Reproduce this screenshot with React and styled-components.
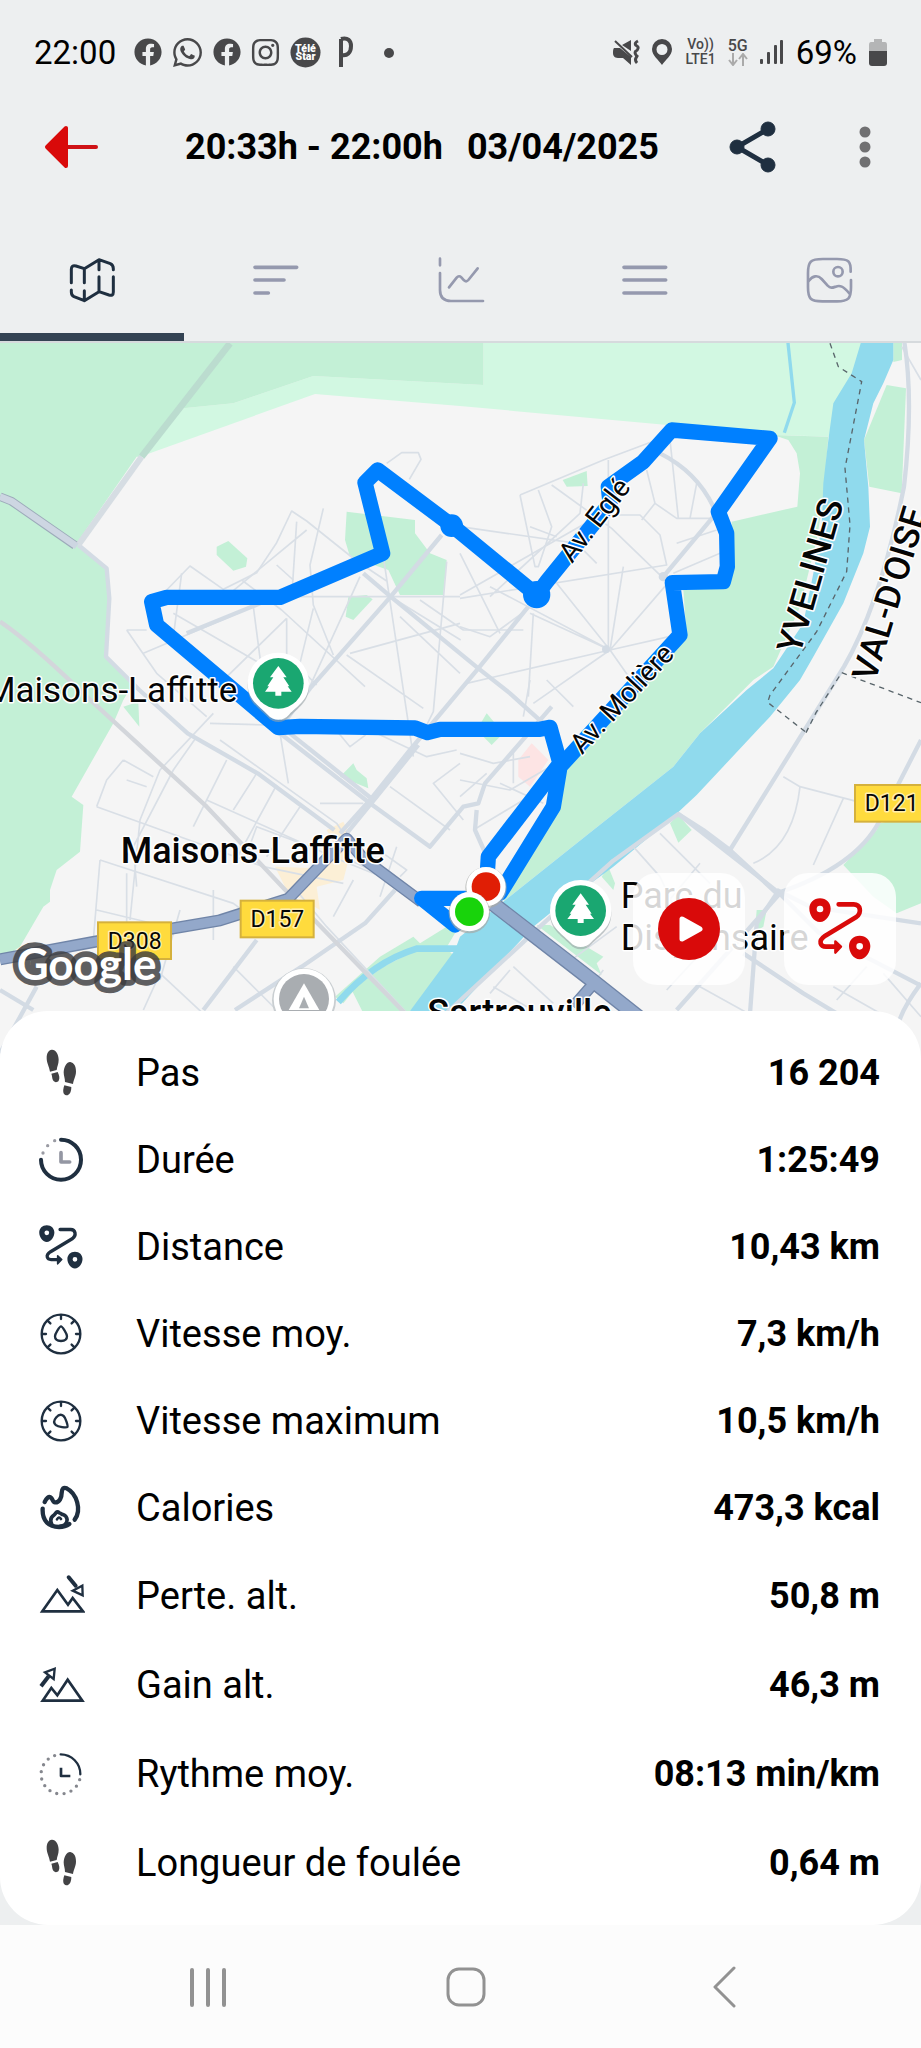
import React from 'react';
import styled, { createGlobalStyle } from 'styled-components';
import { FaFacebook, FaInstagram, FaWhatsapp } from 'react-icons/fa';

const colors = {
  page: '#edeff0',
  navy: '#1f2f40',
  muted: '#9599ae',
  red: '#d90a0a',
  status: '#48484a',
  route: '#0080ff',
  park: '#c3f0d6',
  lightPark: '#d2f8e2',
  water: '#90daed',
  street: '#d3dbe4',
  highway: '#93a8ca'
};

const GlobalStyle = createGlobalStyle`
  * {
    box-sizing: border-box;
  }
  body {
    margin: 0;
    background: ${colors.page};
    color: #000;
    font-family: Roboto, 'Liberation Sans', sans-serif;
  }
`;

const Screen = styled.div`
  display: flex;
  flex-direction: column;
  min-height: 100vh;
`;

const StatusBar = styled.div`
  display: flex;
  align-items: center;
  justify-content: space-between;
  height: 104px;
  padding: 0 34px;
  font-size: 33px;
`;

const StatusGroup = styled.div`
  display: flex;
  align-items: center;
  gap: ${props => props.$gap}px;
  color: ${colors.status};

  svg {
    display: block;
    flex: none;
  }
`;

const StatusText = styled.span`
  color: #000;
  margin-right: ${props => props.$after || 0}px;
`;

const NetworkLabel = styled.span`
  display: flex;
  flex-direction: column;
  align-items: center;
  font-size: ${props => props.$size}px;
  line-height: 15px;
  font-weight: 500;
`;

const TopBar = styled.header`
  display: flex;
  align-items: center;
  height: 86px;
  padding: 0 50px 0 44px;
`;

const IconButton = styled.button`
  display: flex;
  align-items: center;
  justify-content: center;
  padding: 0;
  border: 0;
  background: none;
  cursor: pointer;
`;

const Title = styled.h1`
  display: flex;
  flex: 1;
  gap: 24px;
  margin: 0 0 0 85px;
  font-size: 36px;
  font-weight: 700;
  white-space: nowrap;
`;

const TopActions = styled.div`
  display: flex;
  align-items: center;
  gap: 82px;
`;

const Tabs = styled.nav`
  display: flex;
  margin-top: 28px;
  border-bottom: 2px solid #d6dadd;
`;

const Tab = styled(IconButton)`
  flex: 1;
  height: 123px;
  color: ${props => (props.$active ? colors.navy : colors.muted)};
  box-shadow: ${props => (props.$active ? 'inset 0 -8px #344353' : 'none')};
`;

const MapSection = styled.section`
  position: relative;
  height: 716px;
  overflow: hidden;
`;

const MapSvg = styled.svg`
  display: block;
  width: 100%;
  height: 100%;
`;

const MapButtons = styled.div`
  position: absolute;
  right: 25px;
  bottom: 74px;
  display: flex;
  gap: 39px;
`;

const MapButton = styled(IconButton)`
  width: 112px;
  height: 112px;
  border-radius: 24px;
  background: rgba(255, 255, 255, 0.84);
  color: ${colors.red};
`;

const Card = styled.dl`
  position: relative;
  margin: -48px 0 0;
  padding: 18px 0;
  border-radius: 48px;
  background: #fff;
`;

const Row = styled.div`
  display: flex;
  align-items: center;
  height: ${props => (props.$tall ? 89 : 87)}px;
  padding: 0 41px 0 37px;
`;

const Label = styled.dt`
  display: flex;
  flex: 1;
  align-items: center;
  font-size: 38px;
`;

const IconSlot = styled.span`
  display: flex;
  justify-content: center;
  width: 48px;
  margin-right: 51px;
  color: ${colors.navy};
`;

const Value = styled.dd`
  margin: 0;
  font-size: 36px;
  font-weight: 700;
`;

const SystemNav = styled.nav`
  display: flex;
  flex: 1;
  min-height: 123px;
  padding: 0 68px 0 79px;
  background: #fcfcfc;
`;

const SystemButton = styled(IconButton)`
  flex: 1;
  color: #929292;
`;

const MapLabel = styled.text`
  fill: #050505;
  stroke: ${props => props.$halo || '#fff'};
  stroke-width: 9px;
  stroke-linejoin: round;
  paint-order: stroke;
  font-size: ${props => props.$size}px;
  font-weight: ${props => (props.$strong ? 500 : 400)};
`;

const GoogleMark = styled.text`
  fill: #fff;
  stroke: #3c3c3e;
  stroke-opacity: 0.82;
  stroke-width: 34px;
  stroke-linejoin: round;
  paint-order: stroke;
  font-family: Lato, sans-serif;
  font-size: 132px;
  font-weight: 700;
`;

const Icon = ({ size = 48, children, ...rest }) => (
  <svg
    width={size}
    height={size}
    viewBox="0 0 144 144"
    fill="none"
    stroke="currentColor"
    strokeWidth="8"
    strokeLinecap="round"
    strokeLinejoin="round"
    aria-hidden="true"
    {...rest}
  >
    {children}
  </svg>
);

const StepsIcon = () => (
  <Icon fill="#434345" stroke="none">
    <path d="M44 2c12-1 21 13 21 30 0 13-5 20-6 31l-20 5C36 51 29 42 29 27 29 12 35 3 44 2z" />
    <path d="M43 74l19-5c5 10 7 19 3 26-4 6-13 6-17-1-3-6-2-13-5-20z" />
    <path d="M100 39c11 2 17 13 17 28 0 16-7 24-9 38l-24-6c0-12-4-18-4-29 1-18 10-32 20-31z" />
    <path d="M82 109l21 5c0 12-4 25-15 25-10-1-12-13-6-30z" />
  </Icon>
);

const DurationIcon = () => (
  <Icon strokeWidth="12">
    <path d="M72 11a60 60 0 1 1-60 60" />
    <g fill="#9a9ba3" stroke="none">
      <circle cx="53" cy="14" r="5" />
      <circle cx="32" cy="29" r="5" />
      <circle cx="18" cy="51" r="5" />
    </g>
    <path d="M72 50v28h26" stroke="#9497a3" strokeWidth="11" />
  </Icon>
);

const PaceIcon = () => (
  <Icon strokeWidth="7">
    <path d="M71 13a59 59 0 0 1 59 60" />
    <path
      d="M128 89A59 59 0 1 1 55 16"
      stroke="#85878e"
      strokeWidth="10"
      strokeDasharray="0 22"
    />
    <path d="M72 57v21h24" strokeLinecap="square" strokeWidth="8" />
  </Icon>
);

const RouteIcon = ({ size }) => (
  <svg
    width={size}
    height={size}
    viewBox="0 0 186 186"
    fill="none"
    stroke="currentColor"
    strokeWidth="14"
    strokeLinecap="round"
    strokeLinejoin="round"
    aria-hidden="true"
  >
    <path
      d="M33 1c19 0 32 13 32 31 0 17-13 40-32 40S1 50 1 32C1 14 14 1 33 1zm0 22a10 10 0 1 0 0 20 10 10 0 0 0 0-20z"
      fill="currentColor"
      stroke="none"
      fillRule="evenodd"
    />
    <path
      d="M152 113c19 0 32 13 32 31 0 17-13 40-32 40s-32-22-32-40c0-18 13-31 32-31zm0 22a10 10 0 1 0 0 20 10 10 0 0 0 0-20z"
      fill="currentColor"
      stroke="none"
      fillRule="evenodd"
    />
    <path d="M89 19h45c21 0 25 25 8 38L49 113c-25 17-13 33 2 33h34" />
    <path d="M79 130l17 16-17 18z" fill="currentColor" strokeWidth="7" />
  </svg>
);

const SpeedIcon = ({ turn = 0 }) => (
  <Icon strokeWidth="7">
    <circle cx="72" cy="72" r="58" />
    {[0, 45, 90, 135, 225, 270, 315].map(angle => (
      <path key={angle} d="M72 16v11" transform={`rotate(${angle} 72 72)`} />
    ))}
    <path
      d="M72 49c4 0 18 22 18 30 0 10-8 14-18 14s-18-4-18-14c0-8 14-30 18-30z"
      transform={`rotate(${turn} 72 74)`}
    />
  </Icon>
);

const FlameIcon = () => (
  <Icon strokeWidth="13">
    <path d="M23 54c6-12 12-17 18-14 7 4 5 15 13 15 14 1 20-16 20-28 1-14 6-18 15-14 30 15 46 65 24 94" />
    <path d="M17 74c-2 38 19 55 49 55 15 0 23-3 31-9" />
    <path
      d="M44 120c-6-13-2-21 7-27 5-4 8-14 15-7 9 2 6 6 13 6 14 6 14 21 5 30-4 4-10 5-16 5"
      strokeWidth="11"
    />
    <path d="M60 106c4-7 8-7 12-1" strokeWidth="8" />
  </Icon>
);

const LossIcon = () => (
  <Icon strokeWidth="8" strokeLinecap="butt" strokeLinejoin="miter">
    <path d="M16 118l45-64 32 44 14-20 31 40z" />
    <path d="M95 16l21 25" strokeWidth="12" strokeLinecap="round" />
    <path d="M107 56l29-15 1 29z" strokeWidth="7" />
  </Icon>
);

const GainIcon = () => (
  <Icon strokeWidth="8" strokeLinecap="butt" strokeLinejoin="miter">
    <path d="M17 119l26-38 18 22 31-47 44 63z" />
    <path d="M12 76l23-30" strokeWidth="12" />
    <path d="M24 34l29-11-3 31z" strokeWidth="7" />
  </Icon>
);

const stats = [
  { label: 'Pas', value: '16 204', icon: <StepsIcon /> },
  { label: 'Durée', value: '1:25:49', icon: <DurationIcon /> },
  { label: 'Distance', value: '10,43 km', icon: <RouteIcon size={44} /> },
  { label: 'Vitesse moy.', value: '7,3 km/h', icon: <SpeedIcon /> },
  { label: 'Vitesse maximum', value: '10,5 km/h', icon: <SpeedIcon turn={130} /> },
  { label: 'Calories', value: '473,3 kcal', icon: <FlameIcon /> },
  { label: 'Perte. alt.', value: '50,8 m', icon: <LossIcon />, tall: true },
  { label: 'Gain alt.', value: '46,3 m', icon: <GainIcon />, tall: true },
  { label: 'Rythme moy.', value: '08:13 min/km', icon: <PaceIcon />, tall: true },
  { label: 'Longueur de foulée', value: '0,64 m', icon: <StepsIcon />, tall: true }
];

const tabs = [
  {
    name: 'Carte',
    icon: (
      <Icon strokeWidth="9">
        <path d="M10 80V40q0-14 14-10l25 8 44-27 34 12q9 4 9 15v3M49 38v42M93 11v30M93 62v45M136 62v46q0 13-13 9l-30-10-44 27-31-12q-8-4-8-14v-6M49 104v30" />
      </Icon>
    )
  },
  {
    name: 'Résumé',
    icon: (
      <Icon strokeWidth="11">
        <path d="M9 34h125M9 72h87M9 111h40" />
      </Icon>
    )
  },
  {
    name: 'Graphique',
    icon: (
      <Icon>
        <path d="M9 8v20M9 51v51q0 33 33 33h96M36 94l23-29q7-8 14-1l8 9q7 6 13-1l28-35" />
      </Icon>
    )
  },
  {
    name: 'Étapes',
    icon: (
      <Icon strokeWidth="11">
        <path d="M9 34h125M9 72h125M9 111h125" />
      </Icon>
    )
  },
  {
    name: 'Photos',
    icon: (
      <Icon>
        <path d="M137 47C138 14 130 9 96 9H54C16 9 9 16 9 52v42c0 35 8 42 43 42h44c34 0 42-8 42-42V72" />
        <circle cx="99" cy="47" r="14" />
        <path d="M11 75c12-16 27-19 39-6l18 20c9 9 15 6 24 3 13-5 22-2 41 20" />
      </Icon>
    )
  }
];

// Map geometry, three units per pixel
const parks = [
  '0,0 1450,0 1450,135 940,108 700,190 550,205 430,350 410,350 230,610 315,680 330,780 318,860 320,950 400,1030 370,1080 340,1150 215,1370 250,1395 240,1535 170,1590 150,1650 150,1685 130,1700 60,1820 0,1860',
  '370,1100 415,1085 418,1160',
  '2320,285 2365,300 2390,340 2400,400 2392,500 2195,545 2200,650 2180,740 2050,750 2060,890 1860,1050 1690,1290 1650,1420 1530,1620 1510,1685 1780,1470 2020,1280 2100,1180 2260,1020 2320,980 2400,800 2450,600 2470,480 2485,290',
  '2660,135 2718,145 2705,460 2608,440 2592,300',
  '2680,0 2706,0 2706,60 2680,66',
  '2640,1450 2763,1420 2763,1690 2690,1720 2620,1670 2530,1575 2630,1470',
  '2010,1450 2035,1425 2075,1470 2035,1508',
  '1805,1610 1825,1580 1845,1630 1840,1650',
  '1460,1120 1510,1180 1475,1215 1430,1170',
  '1610,1755 1650,1755 1810,1850 1790,1870 1805,1905',
  '2270,1710 2300,1710 2290,1760 2265,1775',
  '1040,515 1245,540 1245,580 1290,640 1340,660 1330,765 1200,765 1165,690 1050,650 1035,600',
  '650,620 685,603 742,655 738,680 700,692 650,645',
  '1045,770 1100,765 1118,778 1060,840 1037,830',
  '1688,420 1760,393 1763,438 1700,440',
  '1020,1310 1060,1270 1070,1290 1100,1315 1105,1345',
  '1005,1970 1140,1850 1240,1790 1260,1810 1340,1760 1365,1780 1340,1822 1240,1825 1120,1880 1030,1990',
  '1055,1950 1150,1880 1250,1830 1340,1826 1365,1850 1225,2020 1090,2020'
];

const mainStreets = [
  'M235 615l85 70 8 90-10 175 100 100 145 130 210 120 230 170',
  'M560 880L780 790',
  'M1090 700l82 70 263 215 95 75 100 90 40 40',
  'M1325 585L1172 770 930 1045 850 1150',
  'M1585 800L1435 985 1230 1230 1110 1380 1020 1480',
  'M1255 1215L1130 1370 1040 1480',
  'M840 1180l270 210 180 130 100-120 45-10 20-60 200-230',
  'M870 1180l250 200',
  'M1980 340q110 55 160 160l0 30-150 180',
  'M2712 0q30 180 0 440-70 350-180 540L2190 1530l-80-60-75-48-195 140-190 170-400 370',
  'M2190 1530l140 130-60 90-20 270M2330 1650l100 50 333 50M2330 1660q240-80 310-220l123-240',
  'M2035 1422l300 235 120 120 308 160',
  'M2763 1930q-60 80-70 130',
  'M2230 1840l180 120 100 60',
  'M1430 1410l-5 60 40 90',
  'M1185 1650l-90 100-190 130-200 130M770 1800L610 2010M110 1940L0 2140M0 1950l100 60',
  'M2340 1660l-150 170-160 180'
];

const lanes = [
  'M500 750l70-72 100 70 100-50 60-90 45-95 45 30 150 120 90 60',
  'M545 700l-25 190M890 545l-15 230M920 570L690 760M970 505l-40 170 10 120 60 150M725 720l120 90 250 230',
  'M380 870h60M380 870l90 130 150 130M430 940l330-140 30 230M520 820l260 150M860 835L650 1040M860 835v110l90 90M940 805L890 1010M840 770h540',
  'M1150 650l90 600M1340 665l-40 450-20 40M1172 770l210 130M1200 830l180 170M1050 940l330-90M1040 945l230 160M830 675l50 45M1260 780l130 90h180',
  'M1160 370l45-32h50l8 20-35 60M1080 710l-50 110-110 240',
  'M1560 465l250-105 160-60M1560 465l45 215h10l40-120-40-110M1655 435l180 130 150 145M1825 360v570M1830 930L1470 740M1830 930l190-220M1830 930L1670 730M1830 930l40-250M1830 930L1400 1030M1830 930l220-50M1830 930l-240-110M1830 930l-230 160M1830 930l70 100',
  'M1380 560l350 50 60 60M1380 765l420-240h120l60 60 20 90-620 100M1940 390l25 100-40 50M1965 490l65 45h110M2010 300l25 235M2090 430l-20 105M2150 570l-120 40M2160 640l-140 60M1750 430l-10 90-270 250M1600 820l-15 250M1590 560l80 30M1380 640l120 240M1380 860l90 30 110-80',
  'M630 1150l170 5M840 1180l25 150M590 1190l-70 100-120 230 10 120M680 1260l-100 200M770 1300l-70 110M830 1335l-120 220M900 1400l-100 150M640 1120L480 1290l-60 150-30 300M300 1560l400 130 120 90M290 1400l500 180 240 50M370 1260l-50 60-30 80M370 1260l90 50M380 1320l60 20M300 1560l-20 240M290 1710l250 60M380 1600v220M540 1710l-60 210M620 1380l400 180 200 80M640 1650v150M660 1200l350 250 20 30M730 1570l40-110 160 60',
  'M960 1390h130M1000 1160l50 60 80-60M1170 1340l180 130M1380 1270l-80 60 90 110M1130 1180l150 70 90-20M1230 1650l-180-90M1060 1620l-60 110M1140 1670l50-150M880 1640l100 120 260 280M700 1880l130 130M480 1900l-50 110M480 1900l150 140M1150 1540l70 50-20 20',
  'M1380 1240l100 30 110-20M1590 1020l-20 110M1640 1020l80 80M1380 1320l150 30 120-70M1500 1330l130 60M1420 1470l150-90M1540 1230v100M1380 1370l80-70',
  'M2350 1310l50 30 230 60M2400 1340q-20 180-140 230M2530 1375l-90 200M1900 1520l80 90 60 130M1980 1480l150 150M2100 1570l-100 120M1480 1940l100 60M1540 1880l120 110M1620 1810l160 120 30-40M1850 1760l-150 110M1470 1960l60-70M2000 1950l120-130M2100 1940l180 100M2500 1940l140 80M2600 1880l-90 100M2763 120L2705 20M2650 1900l113 130'
];

const pinShape =
  'M0-92a91 91 0 0 1 92 92c0 50-32 65-60 94-17 20-47 20-64 0C-60 65-92 50-92 0A91 91 0 0 1 0-92z';

const PlacePin = ({ x, y }) => (
  <g transform={`translate(${x} ${y})`}>
    <path d={pinShape} fill="#9aa3a7" opacity="0.6" transform="translate(0 7)" />
    <path d={pinShape} fill="#fff" />
    <circle r="76" fill="#1aa771" />
    <path d="M0-52l25 34h-10l18 27H28l12 16H9v12H-9V25h-31l12-16h-5l18-27h-10z" fill="#fff" />
  </g>
);

const Shield = ({ x, y, children }) => (
  <g>
    <rect x={x} y={y} width="219" height="110" fill="#ffdb3d" stroke="#d5b13c" strokeWidth="6" />
    <MapLabel x={x + 110} y={y + 79} $size={69} textAnchor="middle" $halo="#ffefae">
      {children}
    </MapLabel>
  </g>
);

const RouteMap = () => (
  <MapSvg viewBox="0 9 2763 2148" preserveAspectRatio="xMidYMid slice" role="img" aria-label="Parcours">
    <rect width="2763" height="2160" fill="#f5f5f5" />
    <polygon
      points="420,350 945,162 1380,198 2330,285 2500,290 2560,160 2600,0 1450,0 1450,135 940,108 700,190 550,205"
      fill={colors.lightPark}
    />
    {parks.map(points => (
      <polygon key={points} points={points} fill={colors.park} />
    ))}
    <polygon points="1595,1210 1645,1260 1590,1340 1555,1310 1555,1260" fill="#fde4e4" />
    <path d="M980 1470l50-25 30 60-30 115-80 20 10 70-100-60-35-70 130 5 60-50z" fill="#fcefd6" />
    <polygon
      points="2585,0 2555,100 2500,190 2485,300 2470,430 2465,560 2440,700 2410,850 2320,985 2240,1050 2100,1180 2020,1280 1780,1470 1510,1685 1380,1790 1365,1830 1225,2020 1180,2160 1240,2160 1340,2040 1600,1760 1650,1720 1840,1580 2020,1430 2090,1365 2310,1130 2400,1020 2440,950 2530,790 2590,640 2610,560 2605,440 2592,300 2620,190 2650,130 2680,60 2680,0"
      fill={colors.water}
    />
    <g fill="none" stroke={colors.water}>
      <path d="M2363 0l20 188-30 90" strokeWidth="10" />
      <path d="M1390 1826h-140q-130 40-235 160" strokeWidth="20" />
    </g>
    <g fill="none" strokeLinejoin="round">
      {lanes.map(d => (
        <path key={d} d={d} stroke="#d9dfe6" strokeWidth="5" />
      ))}
      {mainStreets.map(d => (
        <path key={d} d={d} stroke={colors.street} strokeWidth="13" />
      ))}
      <path d="M0 845q90 60 260 225l360 330 250 265 350 360" stroke="#d3d6db" strokeWidth="13" />
      <path d="M690 10L425 350" stroke="#bbdccf" strokeWidth="20" />
      <path d="M425 350L235 615" stroke="#d6dde3" strokeWidth="18" />
      <path d="M0 470l35 14 190 132" stroke="#9dabba" strokeWidth="26" />
      <path d="M0 470l35 14 195 135" stroke="#cdd6e2" strokeWidth="20" />
      <circle cx="1818" cy="928" r="12" fill={colors.street} />
      <circle cx="1990" cy="710" r="14" fill={colors.street} />
      {[
        { color: '#7085a8', width: 36 },
        { color: colors.highway, width: 28 }
      ].map(line => (
        <g key={line.color} stroke={line.color}>
          <path d="M0 1858l280-52 380-65 205-65 115-120 60-60 50 60 175 130" strokeWidth={line.width} />
          <path d="M1480 1692l300 232 240 190" strokeWidth={line.width + 10} />
          <path d="M1790 1920l-70 80" strokeWidth={line.width} />
        </g>
      ))}
    </g>
    <g fill="none" stroke="#59656b" strokeWidth="4" strokeDasharray="16 14">
      <path d="M2490 10l25 70 70 45-50 260 15 170-10 140-90 180-140 190-7 22 115 90" />
      <path d="M2418 1178l30-60 77-120 238 90" />
    </g>
    <g fill="none" stroke={colors.route} strokeWidth="46" strokeLinejoin="round" strokeLinecap="round">
      <path d="M1610 765L1360 560 1133 390 1095 428 1148 640 840 772H500L455 785 470 855 835 1163 900 1159 1245 1164 1282 1178 1320 1168H1620L1650 1162 1680 1270 1465 1550 1460 1630" />
      <path d="M1610 765L1640 725 1830 490 1825 440 1930 365 2015 270 2310 295 2155 515 2180 580 2182 680 2170 725 2017 728 2040 885 1680 1280 1660 1400 1500 1660" />
      <path d="M1395 1675H1265L1365 1755 1395 1725" />
    </g>
    <circle cx="1610" cy="764" r="41" fill={colors.route} />
    <circle cx="1355" cy="557" r="34" fill={colors.route} />
    <PlacePin x={835} y={1030} />
    <PlacePin x={1742} y={1712} />
    <g>
      <circle cx="912" cy="1981" r="96" fill="#c9ced1" />
      <circle cx="912" cy="1977" r="91" fill="#fff" />
      <circle cx="912" cy="1977" r="75" fill="#a9adb1" />
      <path d="M912 1930l46 80h-92z" fill="#fff" />
      <path d="M912 1970l15 35h-30z" fill="#a9adb1" />
    </g>
    {[
      { x: 1458, y: 1640, color: '#e01e05' },
      { x: 1408, y: 1715, color: '#18d30b' }
    ].map(point => (
      <g key={point.color}>
        <circle cx={point.x} cy={point.y + 3} r="62" fill="#a7aaa7" opacity="0.7" />
        <circle cx={point.x} cy={point.y} r="59" fill="#fff" />
        <circle cx={point.x} cy={point.y} r="43" fill={point.color} />
      </g>
    ))}
    <MapLabel x="712" y="1085" $size={105} textAnchor="end">Maisons-Laffitte</MapLabel>
    <MapLabel x="362" y="1570" $size={108} $strong>Maisons-Laffitte</MapLabel>
    <MapLabel x="1282" y="2056" $size={108} $strong>Sartrouville</MapLabel>
    <MapLabel x="1862" y="1704" $size={108}>Parc du</MapLabel>
    <MapLabel x="1862" y="1830" $size={108}>Dispensaire</MapLabel>
    <MapLabel $size={84} transform="translate(1716 672) rotate(-52)">Av. Eglé</MapLabel>
    <MapLabel $size={84} transform="translate(1746 1246) rotate(-47)">Av. Molière</MapLabel>
    <MapLabel $size={105} $strong transform="translate(2400 946) rotate(-74)">YVELINES</MapLabel>
    <MapLabel $size={105} $strong transform="translate(2625 1028) rotate(-73)">VAL-D'OISE</MapLabel>
    <Shield x={294} y={1747}>D308</Shield>
    <Shield x={722} y={1682}>D157</Shield>
    <Shield x={2565} y={1335}>D121</Shield>
    <GoogleMark x="50" y="1921">Google</GoogleMark>
  </MapSvg>
);

const App = () => (
  <Screen>
    <GlobalStyle />
    <StatusBar>
      <StatusGroup $gap={9}>
        <StatusText $after={9}>22:00</StatusText>
        <FaFacebook size={28} />
        <FaWhatsapp size={33} />
        <FaFacebook size={28} />
        <FaInstagram size={31} />
        <svg width="31" height="31" viewBox="0 0 32 32">
          <circle cx="16" cy="16" r="15.5" fill={colors.status} />
          <g fill="#fff" fontSize="11" fontWeight="900" textAnchor="middle">
            <text x="16" y="15">Télé</text>
            <text x="16" y="24">Star</text>
          </g>
        </svg>
        <svg width="31" height="32" viewBox="0 0 31 32" fill="none" stroke={colors.status}>
          <path d="M11 31V3" strokeWidth="4" />
          <path d="M11 3c7-2 10 2 10 7 0 7-4 10-9 9" strokeWidth="4" />
        </svg>
        <svg width="26" height="11" viewBox="0 0 26 11">
          <circle cx="19" cy="6" r="5" fill={colors.status} />
        </svg>
      </StatusGroup>
      <StatusGroup $gap={12}>
        <svg width="27" height="26" viewBox="0 0 27 26" fill={colors.status}>
          <path d="M18 1v11l-9-6zM1 9h6l11 9v8l-8-7H5c-4 0-5-3-5-5s0-4 1-5z" />
          <path d="M2 2l17 16" stroke={colors.status} strokeWidth="2" />
          <path
            d="M25 2c-4 2-3 4-1 5s1 4-1 5 0 5 1 5-4 3 0 7"
            fill="none"
            stroke={colors.status}
            strokeWidth="3"
          />
        </svg>
        <svg width="21" height="26" viewBox="0 0 21 26" fill={colors.status}>
          <path
            d="M10 0a10 10 0 0 1 10 10c0 7-7 11-10 16C7 21 0 17 0 10A10 10 0 0 1 10 0zm0 5a5 5 0 1 0 0 11 5 5 0 0 0 0-11z"
            fillRule="evenodd"
          />
        </svg>
        <NetworkLabel $size={14}>
          <span>Vo))</span>
          <span>LTE1</span>
        </NetworkLabel>
        <NetworkLabel $size={16}>
          <span>5G</span>
          <svg width="20" height="13" viewBox="0 0 20 13" fill="none" stroke="#aaa" strokeWidth="2">
            <path d="M5 0v12M1 7l4 5 4-5M15 13V1M11 6l4-5 4 5" />
          </svg>
        </NetworkLabel>
        <svg width="24" height="26" viewBox="0 0 24 26" fill={colors.status}>
          <rect y="20" width="3" height="5" rx="1" />
          <rect x="7" y="13" width="3" height="12" rx="1" />
          <rect x="14" y="6" width="3" height="19" rx="1" />
          <rect x="20" y="1" width="3" height="24" rx="1" />
        </svg>
        <StatusText>69%</StatusText>
        <svg width="18" height="27" viewBox="0 0 18 27">
          <path d="M5 0h8v3h3q2 0 2 3v7H0V6q0-3 2-3h3z" fill="#b4b5b6" />
          <path d="M0 12h18v12q0 3-3 3H3q-3 0-3-3z" fill={colors.status} />
        </svg>
      </StatusGroup>
    </StatusBar>
    <TopBar>
      <IconButton aria-label="Retour">
        <svg width="56" height="44" viewBox="0 0 56 44" stroke="#cf1216" strokeLinecap="round" strokeLinejoin="round">
          <path d="M20 22h32" strokeWidth="4" />
          <path d="M3 22L22 3v38z" fill={colors.red} stroke={colors.red} strokeWidth="4" />
        </svg>
      </IconButton>
      <Title>
        <span>20:33h - 22:00h</span>
        <span>03/04/2025</span>
      </Title>
      <TopActions>
        <IconButton aria-label="Partager">
          <svg width="48" height="52" viewBox="0 0 48 52" fill={colors.navy} stroke={colors.navy}>
            <path d="M39 8L8 26l31 18" fill="none" strokeWidth="5" />
            <circle cx="39" cy="8" r="7" />
            <circle cx="8" cy="26" r="7" />
            <circle cx="39" cy="44" r="7" />
          </svg>
        </IconButton>
        <IconButton aria-label="Plus">
          <svg width="12" height="42" viewBox="0 0 12 42" fill="#707072">
            <circle cx="6" cy="6" r="5.5" />
            <circle cx="6" cy="21" r="5.5" />
            <circle cx="6" cy="36" r="5.5" />
          </svg>
        </IconButton>
      </TopActions>
    </TopBar>
    <Tabs>
      {tabs.map((tab, index) => (
        <Tab key={tab.name} $active={index === 0} aria-label={tab.name}>
          {tab.icon}
        </Tab>
      ))}
    </Tabs>
    <MapSection>
      <RouteMap />
      <MapButtons>
        <MapButton aria-label="Lecture">
          <svg width="62" height="62" viewBox="0 0 62 62">
            <circle cx="31" cy="31" r="31" fill={colors.red} />
            <path d="M24 21v20l18-10z" fill="#fff" stroke="#fff" strokeWidth="5" strokeLinejoin="round" />
          </svg>
        </MapButton>
        <MapButton aria-label="Parcours">
          <RouteIcon size={62} />
        </MapButton>
      </MapButtons>
    </MapSection>
    <Card>
      {stats.map(stat => (
        <Row key={stat.label} $tall={stat.tall}>
          <Label>
            <IconSlot>{stat.icon}</IconSlot>
            {stat.label}
          </Label>
          <Value>{stat.value}</Value>
        </Row>
      ))}
    </Card>
    <SystemNav>
      <SystemButton aria-label="Applications récentes">
        <Icon size={40} viewBox="0 0 40 40" strokeWidth="4">
          <path d="M4 3v35M20 3v35M36 3v35" />
        </Icon>
      </SystemButton>
      <SystemButton aria-label="Accueil">
        <Icon size={40} viewBox="0 0 40 40" strokeWidth="3">
          <rect x="2" y="2" width="36" height="36" rx="11" />
        </Icon>
      </SystemButton>
      <SystemButton aria-label="Précédent">
        <Icon size={42} viewBox="0 0 42 42" strokeWidth="3">
          <path d="M31 2L12 21l19 19" />
        </Icon>
      </SystemButton>
    </SystemNav>
  </Screen>
);

export default App;
